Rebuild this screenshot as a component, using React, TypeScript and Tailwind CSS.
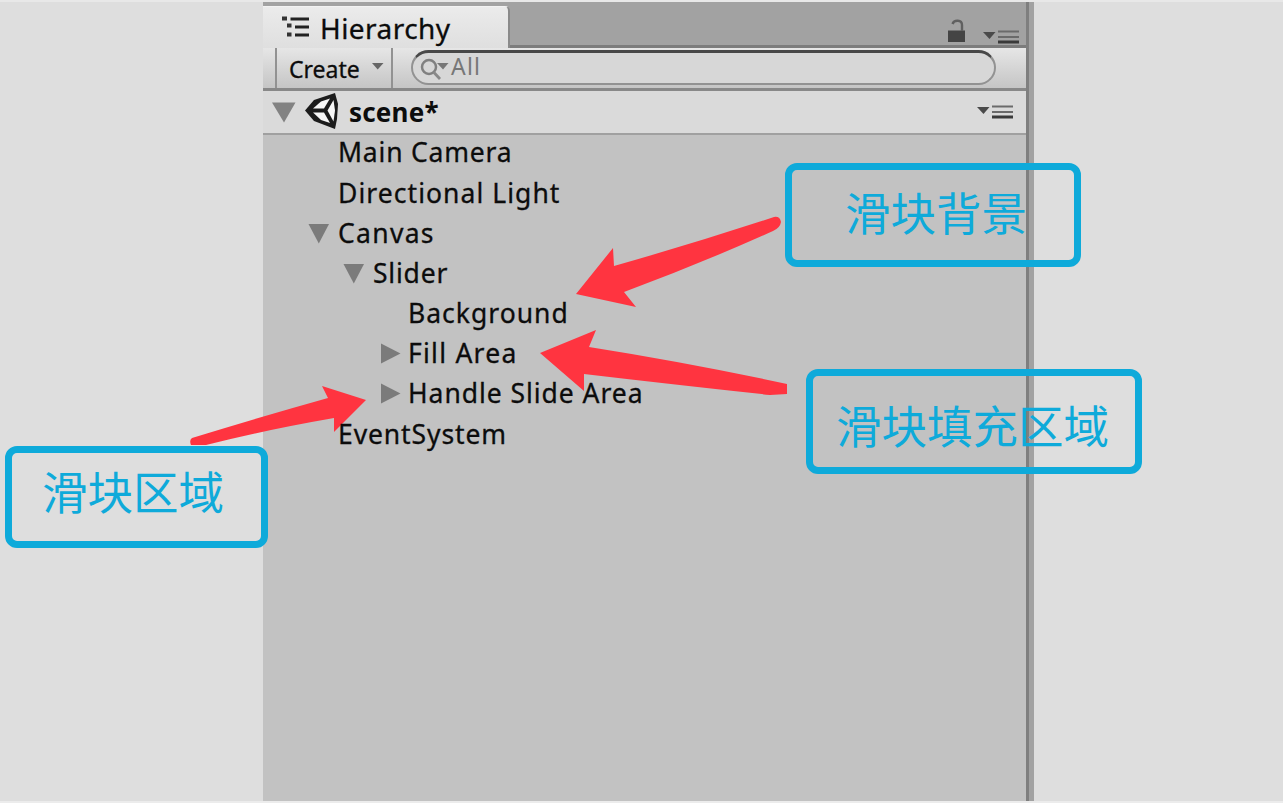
import React from "react";

type Item = { label: string; pad: string; spacing: string; fold?: "open" | "closed" };

const items: Item[] = [
  { label: "Main Camera", pad: "pl-[45px]", spacing: "tracking-[0.8px]" },
  { label: "Directional Light", pad: "pl-[45px]", spacing: "tracking-[1.05px]" },
  { label: "Canvas", pad: "pl-[45px]", spacing: "tracking-[1.3px]", fold: "open" },
  { label: "Slider", pad: "pl-[80px]", spacing: "tracking-[0.8px]", fold: "open" },
  { label: "Background", pad: "pl-[115px]", spacing: "tracking-[1px]" },
  { label: "Fill Area", pad: "pl-[115px]", spacing: "tracking-[1.25px]", fold: "closed" },
  { label: "Handle Slide Area", pad: "pl-[115px]", spacing: "tracking-[0.95px]", fold: "closed" },
  { label: "EventSystem", pad: "pl-[45px]", spacing: "tracking-[0.9px]" },
];

function Fold({ kind }: { kind?: "open" | "closed" }) {
  return (
    <svg width="30" height="24" viewBox="0 0 30 24" className="shrink-0">
      {kind === "open" && <path d="M0.5 3H21L10.8 22.5Z" fill="#7b7b7b" />}
      {kind === "closed" && <path d="M3 1.500L22.500 11.500L3 21.500Z" fill="#7b7b7b" />}
    </svg>
  );
}

function MenuIcon() {
  return (
    <svg width="38" height="16" viewBox="0 0 38 16" className="block">
      <path d="M1 3H13.500L7.500 10Z" fill="#4a4a4a" />
      <path d="M16 2.500H37M16 8H37" stroke="#6a6a6a" strokeWidth="2.200" />
      <path d="M16 13H37" stroke="#3a3a3a" strokeWidth="3" />
    </svg>
  );
}

function TabBar() {
  return (
    <div className="flex h-[46px] bg-[#a2a2a2]">
      <div className="mt-1 flex h-[42px] w-[247px] items-center rounded-tr-[5px] border-r-2 border-t border-r-[#8a8a8a] border-t-[#f2f2f2] bg-linear-to-b from-[#ebebeb] to-[#dfdfdf] pl-[18px]">
        <svg width="30" height="22" viewBox="0 0 30 22" className="-mt-0.5 shrink-0">
          <path d="M1 2.500H6M6 9.500H10.500M6 18.500H10.500" stroke="#333" strokeWidth="4" />
          <path d="M9.500 3H28M14 11H28M14 19H28" stroke="#222" strokeWidth="2.800" />
        </svg>
        <span className="ml-[9px] text-[28px] leading-none tracking-[0.45px] text-[#0c0c0c] [-webkit-text-stroke:0.3px_#0c0c0c]">Hierarchy</span>
      </div>
      <div className="flex flex-1 items-end justify-end border-b-[3px] border-[#7c7c7c] pr-[6px]">
        <svg width="19" height="24" viewBox="0 0 19 24" className="mr-4 mb-0.5">
          <path d="M1 11.500H18V23H1Z" fill="#444" />
          <path d="M15 12V6C15 0.500 7 0.500 5.500 5" fill="none" stroke="#606060" strokeWidth="2.400" />
        </svg>
        <MenuIcon />
      </div>
    </div>
  );
}

function Toolbar() {
  return (
    <div className="flex h-[43px] border-b-[3px] border-[#888] bg-linear-to-b from-[#e6e6e6] to-[#c5c5c5]">
      <div className="w-[12px]" />
      <div className="flex w-[118px] items-center border-x-2 border-[#929292] pl-[12px]">
        <span className="mt-0.5 text-[23px] leading-none tracking-[0px] text-[#0c0c0c] [-webkit-text-stroke:0.3px_#0c0c0c]">Create</span>
        <svg width="12" height="8" viewBox="0 0 12 8" className="mb-1 ml-3">
          <path d="M0 1H11.500L5.700 7.500Z" fill="#666" />
        </svg>
      </div>
      <div className="ml-[18px] mt-[2px] flex h-[35px] w-[585px] items-center rounded-full border-2 border-t-[3px] border-[#929292] border-t-[#484848] bg-[#d7d7d7] pl-[7px]">
        <svg width="29" height="24" viewBox="0 0 29 24" className="mt-0.5">
          <circle cx="9" cy="10" r="7" fill="none" stroke="#808080" strokeWidth="2.500" />
          <path d="M13.500 15L20 22" stroke="#888" strokeWidth="2.800" />
          <path d="M17 6H28.500L23 12.500Z" fill="#777" />
        </svg>
        <span className="mb-1 ml-0.5 text-[23px] leading-none tracking-[1.2px] text-[#777]">All</span>
      </div>
    </div>
  );
}

function SceneRow() {
  return (
    <div className="flex h-[44px] items-center border-b-2 border-[#a0a0a0] bg-[#dadada] pl-[9px] pr-[12px]">
      <svg width="24" height="22" viewBox="0 0 24 22">
        <path d="M0 1.500H23.500L12 21.500Z" fill="#828282" />
      </svg>
      <svg width="36" height="38" viewBox="0 0 36 38" className="-mt-0.5 ml-[8px]">
        <path d="M1 18.500L10 8L31 1L34 12L33 27L31 37L10 29Z" fill="#1c1c1c" />
        <path d="M9 16.500L17 9.500L26 6.500L20 16.500Z" fill="#f7f7f7" />
        <path d="M9 20.500H20L26 31L17 28Z" fill="#f7f7f7" />
        <path d="M29.500 8L31 18.500L29.500 29.500L23.500 18.500Z" fill="#f7f7f7" />
      </svg>
      <span className="ml-[9px] text-[26px] font-bold leading-none tracking-[0.2px] text-[#0c0c0c]">scene*</span>
      <div className="ml-auto">
        <MenuIcon />
      </div>
    </div>
  );
}

function Arrows() {
  return (
    <svg width="1283" height="803" viewBox="0 0 1283 803" className="pointer-events-none absolute left-0 -top-0.5 z-10">
      <g fill="#ff3440">
        <path d="M576 294L613 248L614 266Q695 243 774 217Q780 216 781 222Q780 228 773 231Q702 263 624 292L636 307Z" />
        <path d="M540 353L596 330L589 347Q690 363 787 384V394L770 395Q660 383 584 374V391Z" />
        <path d="M366 400L322 386L328 398Q260 417 192 438Q189 440 191 445H206Q265 430 334 418V432Z" />
      </g>
    </svg>
  );
}

function Callout({ text, box }: { text: string; box: string }) {
  return (
    <div className={"absolute z-30 flex rounded-[12px] border-[7px] border-[#0eaada] text-[45.500px] leading-none text-[#0eaada] font-['Noto_Sans_CJK_SC',sans-serif] font-normal " + box}>
      <span className="whitespace-nowrap">{text}</span>
    </div>
  );
}

export default function App() {
  return (
    <div className="relative flex h-[803px] w-[1283px] overflow-hidden border-b-2 border-t-2 border-b-[#ececec] border-t-[#e8e8e8] bg-[#dedede] pl-[263px] font-['Noto_Sans',sans-serif]">
      <div className="flex w-[771px] border-r-[5px] border-[#a2a2a2]">
        <div className="flex w-[766px] flex-col border-r-[3px] border-[#7f7f7f] bg-[#c2c2c2]">
          <TabBar />
          <Toolbar />
          <SceneRow />
          <div className="-mt-[2.500px]">
            {items.map((it) => (
              <div key={it.label} className={"flex h-[40.200px] items-center " + it.pad}>
                <Fold kind={it.fold} />
                <span className={"relative z-20 text-[26.500px] leading-none text-[#0c0c0c] [-webkit-text-stroke:0.3px_#0c0c0c] whitespace-nowrap " + it.spacing}>{it.label}</span>
              </div>
            ))}
          </div>
        </div>
      </div>
      <Arrows />
      <Callout text="滑块背景" box="left-[785px] top-[161px] h-[104px] w-[296px] pl-[53px] pt-[19px]" />
      <Callout text="滑块填充区域" box="left-[806px] top-[367px] h-[105px] w-[336px] pl-[23px] pt-[26px]" />
      <Callout text="滑块区域" box="left-[5px] top-[444px] h-[102px] w-[263px] pl-[30px] pt-[15px]" />
    </div>
  );
}
